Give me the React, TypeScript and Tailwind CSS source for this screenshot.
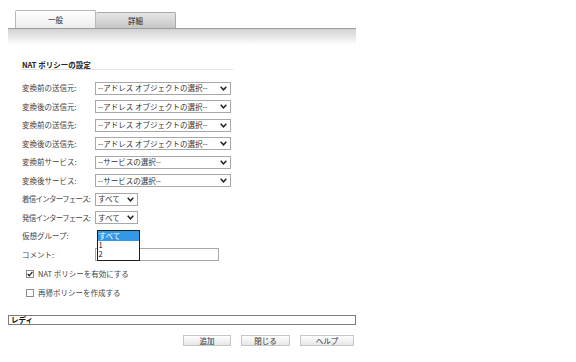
import React from "react";

const Chevron = () => (
  <svg width="7" height="5" viewBox="0 0 7 5" className="shrink-0">
    <path d="M0.7 0.8 L3.5 3.8 L6.3 0.8" fill="none" stroke="#222" strokeWidth="1.5" />
  </svg>
);

const Select = ({ text, w }: { text: string; w: string }) => (
  <div className={`${w} h-[13px] border border-[#a8a8a8] bg-white flex items-center justify-between pl-[2px] pr-[3px] text-[#333]`}>
    <span className="whitespace-nowrap">{text}</span>
    <Chevron />
  </div>
);

const Row = ({ label, children, extra, tight }: { label: string; children?: React.ReactNode; extra?: string; tight?: boolean }) => (
  <div className={`relative flex items-center h-[13px] ${extra ?? ""}`}>
    <div className={`w-[73px] shrink-0 whitespace-nowrap text-[#444] ${tight ? "tracking-[-0.75px]" : ""}`}>{label}</div>
    {children}
  </div>
);

const CheckBox = ({ checked }: { checked: boolean }) => (
  <div className="w-[8px] h-[8px] border border-[#8c8c8c] bg-white flex items-center justify-center">
    {checked && (
      <svg width="6" height="6" viewBox="0 0 6 6">
        <path d="M0.6 3 L2.3 4.8 L5.4 0.9" fill="none" stroke="#222" strokeWidth="1.3" />
      </svg>
    )}
  </div>
);

export default function App() {
  const addr = "--アドレス オブジェクトの選択--";
  const svc = "--サービスの選択--";
  return (
    <div className="w-[576px] h-[362px] bg-white text-[#333] font-['Noto_Sans_CJK_JP',sans-serif] text-[7.5px] leading-none overflow-hidden">
      <div className="pt-[10px] ml-[8px] w-[348px]">
        <div className="flex items-end pl-[7px] h-[18px]">
          <div className="w-[81px] h-[18px] border border-b-0 border-[#b8b8b8] rounded-t-[2px] bg-linear-to-b from-white to-[#ededed] flex items-center justify-center text-[#222]">
            一般
          </div>
          <div className="w-[80px] h-[16px] border border-b-0 border-l-0 border-[#a8a8a8] rounded-t-[2px] bg-linear-to-b from-[#e6e6e6] to-[#c6c6c6] flex items-center justify-center text-[#222]">
            詳細
          </div>
        </div>
        <div className="h-[17px] border-t border-[#9c9c9c] bg-linear-to-b from-[#d2d2d2] to-white" />
      </div>

      <div className="ml-[22px] mt-[15px] w-[211px] h-[10px] border-b border-[#e2e2e2] flex items-center font-bold text-[#222]">
        NAT ポリシーの設定
      </div>

      <div className="ml-[22px] mt-[11.5px] flex flex-col gap-[5.5px]">
        <Row label="変換前の送信元:"><Select text={addr} w="w-[136px]" /></Row>
        <Row label="変換後の送信元:"><Select text={addr} w="w-[136px]" /></Row>
        <Row label="変換前の送信先:"><Select text={addr} w="w-[136px]" /></Row>
        <Row label="変換後の送信先:"><Select text={addr} w="w-[136px]" /></Row>
        <Row label="変換前サービス:"><Select text={svc} w="w-[136px]" /></Row>
        <Row label="変換後サービス:"><Select text={svc} w="w-[136px]" /></Row>
        <Row label="着信インターフェース:" tight><Select text="すべて" w="w-[43px]" /></Row>
        <Row label="発信インターフェース:" tight><Select text="すべて" w="w-[43px]" /></Row>
        <Row label="仮想グループ:" extra="z-10">
          <div className="absolute left-[74.5px] top-0 w-[43px] h-[31px] border border-[#1e1e1e] bg-white flex flex-col text-[#111]">
            <div className="h-[10px] bg-[#3399e6] text-white pl-[1px] flex items-center">すべて</div>
            <div className="h-[9px] pl-[1px] flex items-center">1</div>
            <div className="h-[9px] pl-[1px] flex items-center">2</div>
          </div>
        </Row>
        <Row label="コメント:">
          <div className="w-[124px] h-[13.5px] border border-[#a8a8a8] bg-white" />
        </Row>
      </div>

      <div className="ml-[26px] mt-[6px] flex flex-col gap-[6px] text-[#444]">
        <div className="flex items-center gap-[4px] h-[13px]">
          <CheckBox checked />
          <span>NAT ポリシーを有効にする</span>
        </div>
        <div className="flex items-center gap-[4px] h-[13px]">
          <CheckBox checked={false} />
          <span>再帰ポリシーを作成する</span>
        </div>
      </div>

      <div className="ml-[8px] mt-[15.5px] w-[348px] h-[10px] border border-[#7c7c7c] flex items-center pl-[2px] font-bold text-[#111]">
        レディ
      </div>

      <div className="ml-[8px] mt-[10.5px] w-[348px] flex justify-end gap-[10px] pr-[2px]">
        <div className="w-[48px] h-[11px] border border-[#c6c6c6] bg-linear-to-b from-white to-[#e6e6e6] flex items-center justify-center text-[#333]">追加</div>
        <div className="w-[49px] h-[11px] border border-[#c6c6c6] bg-linear-to-b from-white to-[#e6e6e6] flex items-center justify-center text-[#333]">閉じる</div>
        <div className="w-[54px] h-[11px] border border-[#c6c6c6] bg-linear-to-b from-white to-[#e6e6e6] flex items-center justify-center text-[#333]">ヘルプ</div>
      </div>
    </div>
  );
}
